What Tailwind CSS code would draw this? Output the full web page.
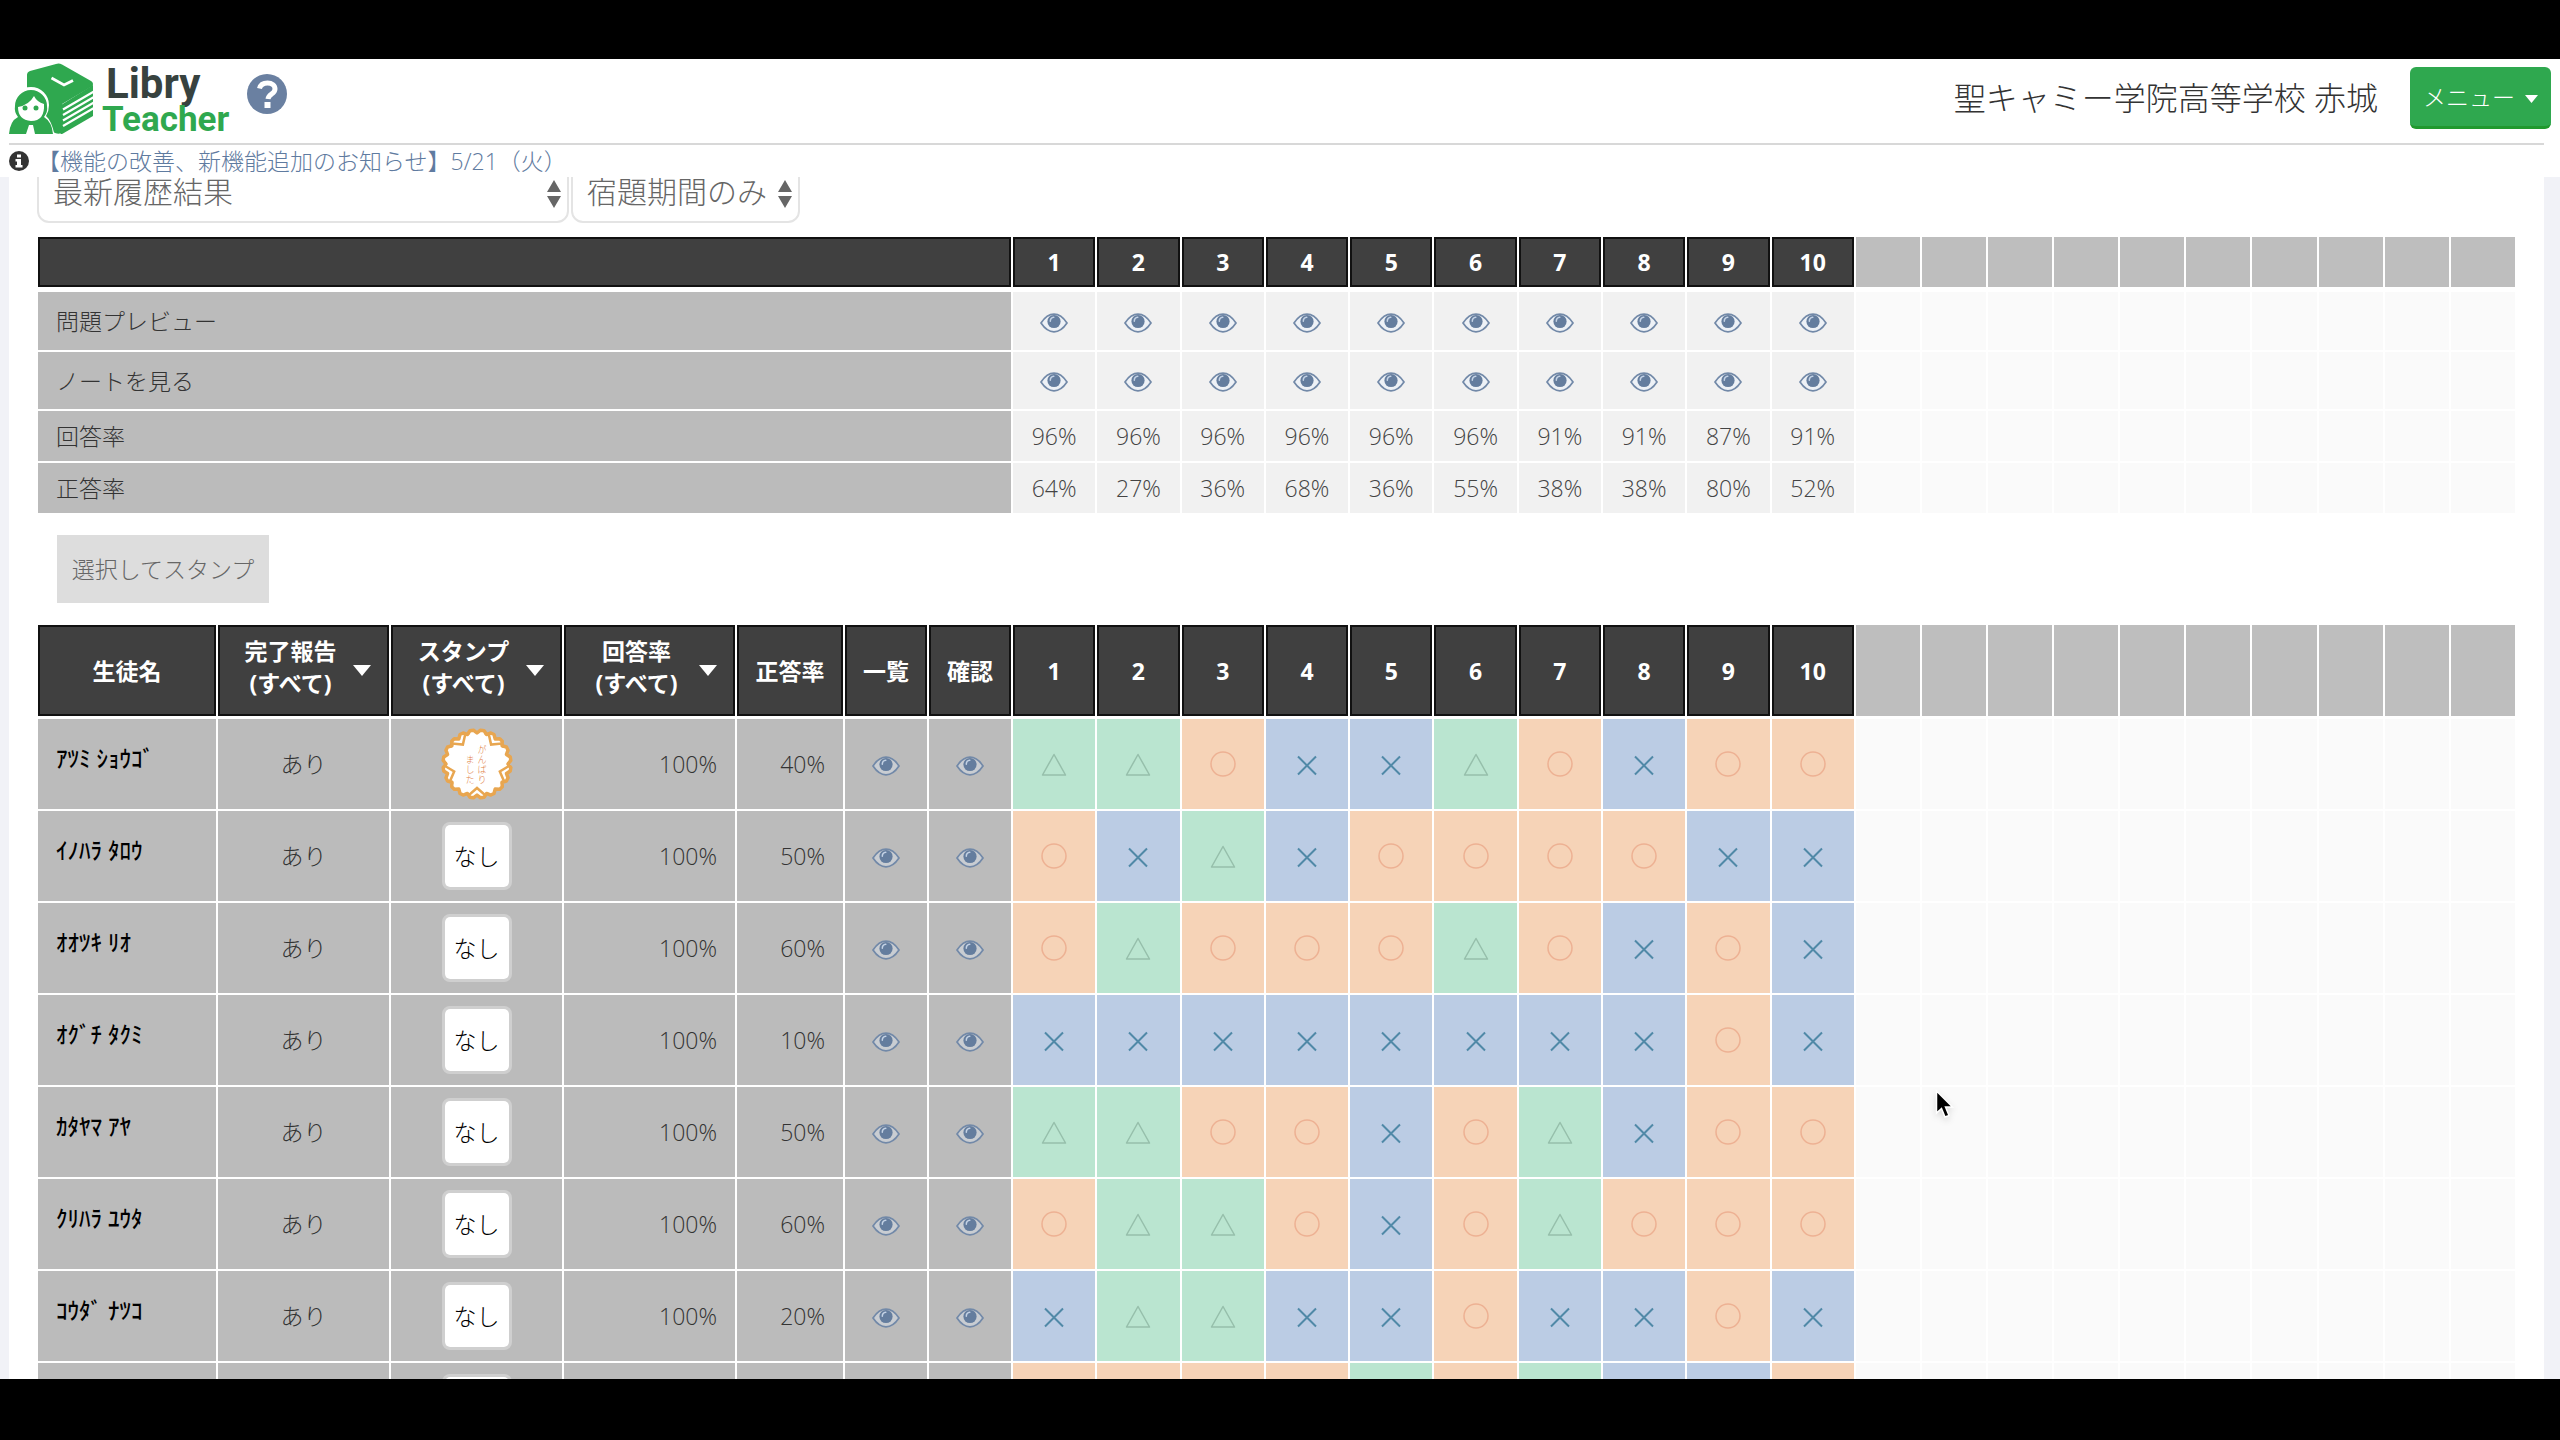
<!DOCTYPE html>
<html lang="ja">
<head>
    <meta charset="UTF-8">
    <meta name="viewport" content="width=device-width, initial-scale=1.0">
    <title>Libry Teacher</title>
    <script src="https://cdn.jsdelivr.net/npm/@tailwindcss/browser@4"></script>
</head>
<body class="h-screen flex flex-col bg-black pt-[59px] pb-[61px] overflow-hidden font-['Open_Sans','Noto_Sans_CJK_JP',sans-serif] text-[23px] leading-8 text-[#333]">

<!-- Shared icons -->
<svg class="hidden">
    <symbol id="eye" viewBox="0 0 28 20">
        <path d="M1 10C5 4 9 1.200 14 1.200S23 4 27 10C23 16 19 18.800 14 18.800S5 16 1 10Z" fill="#e6f1ff" fill-opacity=".35" stroke="#7289a8" stroke-width="1.700"/>
        <circle cx="14" cy="8.500" r="6.600" fill="#647d9e"/>
        <path d="M10.300 8.300C10.300 6 11.600 4.500 13.800 4.300" fill="none" stroke="#c3d2e5" stroke-width="1.500" stroke-linecap="round"/>
    </symbol>
    <symbol id="circle" viewBox="0 -1 28 28">
        <circle cx="14" cy="13" r="12" fill="none" stroke="#edb193" stroke-width="1.500"/>
    </symbol>
    <symbol id="triangle" viewBox="0 -1 28 28">
        <path d="M14 3.500L25.500 24H2.500Z" fill="none" stroke="#96bfab" stroke-width="1.500" stroke-linejoin="round"/>
    </symbol>
    <symbol id="cross" viewBox="0 -1 28 28">
        <path d="M5 5.500L23 23.500M23 5.500L5 23.500" fill="none" stroke="#5089a7" stroke-width="2"/>
    </symbol>
    <symbol id="caret" viewBox="0 0 18 11">
        <path d="M0 0H18L9 11Z" fill="currentColor"/>
    </symbol>
    <symbol id="updown" viewBox="0 0 14 28">
        <path d="M7 0L14 12H0ZM7 28L0 16H14Z" fill="#666"/>
    </symbol>
</svg>

<div class="relative flex-1 min-h-0 overflow-hidden bg-[#f1f2f7]">
    <!-- Header -->
    <header class="relative z-10 bg-white">
        <div class="flex items-start h-[84px] ml-[9px] mr-[9px] pt-1">
            <a href="#" class="flex items-start" aria-label="Libry Teacher">
                <svg class="w-[85px] h-[72px]" viewBox="0 0 85 72">
                    <path d="M18 12Q18 9 21 8L47 1Q50 0 53 1.500L82 18Q85 20 83.500 23L53 41L52 70Q50 71.500 46 70L18 50Z" fill="#2fa84f"/>
                    <path d="M52 42L84 22V53L54 70.500Q51 72 51 69Z" fill="#2fa84f"/>
                    <path d="M54 46.500L85 28.500M54 52L85 34M54 57.500L85 39.500M54 63L85 45" stroke="#fff" stroke-width="2.200" fill="none"/>
                    <path d="M42.500 15L55 22L64 17.500" stroke="#fff" stroke-width="2.800" fill="none"/>
                    <path d="M-2 74Q0 56 8 53Q4 48 4 42A18 18 0 0 1 40 42Q40 48 37 53Q43 58 46 74Z" fill="#fff"/>
                    <path d="M0 71Q1 58 9 54Q5 49 6 43A16 16 0 0 1 38 43Q39 49 35 54Q43 59 44 71H26L24 62H20L17 71Z" fill="#2fa84f"/>
                    <path d="M9 44Q20 42 25 33Q28 39 35 41Q36 58 22 58Q9 57 9 44Z" fill="#fff"/>
                    <circle cx="16" cy="45" r="2.500" fill="#2fa84f"/>
                    <circle cx="27" cy="45" r="2.500" fill="#2fa84f"/>
                </svg>
                <span class="flex flex-col ml-2 font-['Roboto'] font-bold">
                    <span class="ml-1 mt-1 h-[34px] text-[42px] leading-[34px] text-[#37423f]">Libry</span>
                    <span class="h-[36px] text-[35px] leading-[38px] text-[#2fa84f]">Teacher</span>
                </span>
            </a>
            <button class="ml-[18px] mt-[11px]" aria-label="ヘルプ">
                <svg class="size-10" viewBox="0 0 40 40">
                    <circle cx="20" cy="20" r="20" fill="#6a80a1"/>
                    <path d="M12.500 14.500C13.500 10.500 16.500 9 20.500 9C25 9 28 11.300 28 15C28 20 21.500 20 21 25" fill="none" stroke="#fff" stroke-width="5"/>
                    <rect x="17.500" y="28" width="6" height="6" fill="#fff"/>
                </svg>
            </button>
            <p class="ml-auto mr-8 mt-3 text-[32px] leading-[46px] font-light">聖キャミー学院高等学校 赤城</p>
            <button class="flex items-center justify-center gap-2.5 mt-1 w-[141px] h-[62px] rounded-md border-b-3 border-[#20992e] bg-[#2fa84f] text-white font-light">
                メニュー
                <svg class="w-[13px] h-2 mt-1"><use href="#caret"/></svg>
            </button>
        </div>
        <div class="ml-[9px] mr-4 border-t-2 border-[#d8d8d8]"></div>
        <div class="flex items-center gap-2 h-8 ml-[9px]">
            <svg class="size-5" viewBox="0 0 20 20">
                <circle cx="10" cy="10" r="10" fill="#333"/>
                <path d="M8 3.500H12V6.500H8ZM6.500 8H12V14H13.500V16.500H6.500V14H8V10.500H6.500Z" fill="#fff"/>
            </svg>
            <a href="#" class="font-light text-[#5f7ba0]">【機能の改善、新機能追加のお知らせ】5/21（火）</a>
        </div>
    </header>

    <!-- Homework results -->
    <main class="-mt-4 ml-[9px] mr-4 pl-[29px] pr-[27px] bg-white">
        <div class="flex gap-0.5 -ml-px mb-[14px]">
            <label class="relative w-[532px]">
                <select aria-label="結果の種類" class="appearance-none w-full h-[62px] px-3.5 rounded-xl border-2 border-[#e4e4e4] bg-white text-[30px] font-light text-[#666]">
                    <option>最新履歴結果</option>
                </select>
                <svg class="absolute right-2 top-[19px] w-3.5 h-7"><use href="#updown"/></svg>
            </label>
            <label class="relative w-[229px]">
                <select aria-label="期間" class="appearance-none w-full h-[62px] px-3.5 rounded-xl border-2 border-[#e4e4e4] bg-white text-[30px] font-light text-[#666]">
                    <option>宿題期間のみ</option>
                </select>
                <svg class="absolute right-2 top-[19px] w-3.5 h-7"><use href="#updown"/></svg>
            </label>
        </div>

        <!-- Totals per question -->
        <table class="w-full table-fixed border-separate border-spacing-0">
            <thead id="totalsHead"></thead>
            <tbody id="totalsBody"></tbody>
        </table>

        <button class="block mt-5 mb-[22px] ml-[19px] w-[212px] h-[68px] bg-[#ddd] font-light text-[#666]">選択してスタンプ</button>

        <!-- Students -->
        <table class="w-full table-fixed border-separate border-spacing-0">
            <thead id="studentsHead"></thead>
            <tbody id="studentsBody"></tbody>
        </table>
    </main>

    <!-- Mouse pointer -->
    <svg class="absolute left-[1935px] top-[1030px] w-[20px] h-[32px] drop-shadow-md" viewBox="0 0 20 32">
        <path d="M1.500 2V24L6.500 19.500L10 28L14 26.500L10.500 18H17.500Z" fill="#000" stroke="#fff" stroke-width="1.500"/>
    </svg>
</div>

<script>
    const answerRates = ['96%', '96%', '96%', '96%', '96%', '96%', '91%', '91%', '87%', '91%'];
    const correctRates = ['64%', '27%', '36%', '68%', '36%', '55%', '38%', '38%', '80%', '52%'];

    // o = correct, t = partly correct, x = wrong
    const students = [
        {name: 'ｱﾂﾐ ｼｮｳｺﾞ', report: 'あり', stamp: 'がんばりました', answered: '100%', correct: '40%', marks: 'ttoxxtoxoo'},
        {name: 'ｲﾉﾊﾗ ﾀﾛｳ', report: 'あり', stamp: 'なし', answered: '100%', correct: '50%', marks: 'oxtxooooxx'},
        {name: 'ｵｵﾂｷ ﾘｵ', report: 'あり', stamp: 'なし', answered: '100%', correct: '60%', marks: 'otoootoxox'},
        {name: 'ｵｸﾞﾁ ﾀｸﾐ', report: 'あり', stamp: 'なし', answered: '100%', correct: '10%', marks: 'xxxxxxxxox'},
        {name: 'ｶﾀﾔﾏ ｱﾔ', report: 'あり', stamp: 'なし', answered: '100%', correct: '50%', marks: 'ttooxotxoo'},
        {name: 'ｸﾘﾊﾗ ﾕｳﾀ', report: 'あり', stamp: 'なし', answered: '100%', correct: '60%', marks: 'ottoxotooo'},
        {name: 'ｺｳﾀﾞ ﾅﾂｺ', report: 'あり', stamp: 'なし', answered: '100%', correct: '20%', marks: 'xttxxoxxox'},
        {name: '', report: '', stamp: '', answered: '', correct: '', marks: 'oooototxxo'},
    ];

    const markCells = {
        o: '<td class="border-r-2 border-b-2 border-white bg-[#f6d3b7]"><svg class="size-7 mx-auto" role="img" aria-label="正解"><use href="#circle"/></svg></td>',
        t: '<td class="border-r-2 border-b-2 border-white bg-[#bae5d0]"><svg class="size-7 mx-auto" role="img" aria-label="部分正解"><use href="#triangle"/></svg></td>',
        x: '<td class="border-r-2 border-b-2 border-white bg-[#bbcce4]"><svg class="size-7 mx-auto" role="img" aria-label="不正解"><use href="#cross"/></svg></td>',
    };

    const eyeButton = '<button class="block mx-auto pt-[3px]" aria-label="表示"><svg class="w-7 h-5"><use href="#eye"/></svg></button>';
    const emptyCells = '<td class="border-r-2 border-b-2 border-white bg-[#fafafa]"></td>'.repeat(10);
    const darkCell = 'border-r-2 border-white bg-[#404040] bg-clip-padding shadow-[inset_0_0_0_2px_#111] text-white font-bold';

    // Question number headers, then ten unused columns
    const questionHeads = border => {
        let html = '';
        for (let i = 1; i <= 10; i++) {
            html += `<th class="w-[3.4%] ${border} ${darkCell}">${i}</th>`;
        }
        return html + `<th class="${border} border-r-2 border-white bg-[#bebebe]"></th>`.repeat(10);
    };

    const totalsRow = (label, height, cells) => `
        <tr class="${height}">
            <th class="pl-[18px] border-r-2 border-b-2 border-white bg-[#bbb] text-left font-light">${label}</th>
            ${cells.map(c => `<td class="border-r-2 border-b-2 border-white bg-[#f1f1f1] text-center font-light text-[#444]">${c}</td>`).join('')}
            ${emptyCells}
        </tr>`;

    document.getElementById('totalsHead').innerHTML = `
        <tr class="h-[55px]"><th class="w-[975px] border-b-5 ${darkCell}"></th>${questionHeads('border-b-5')}</tr>`;
    document.getElementById('totalsBody').innerHTML =
        totalsRow('問題プレビュー', 'h-[60px]', Array(10).fill(eyeButton)) +
        totalsRow('ノートを見る', 'h-[59px]', Array(10).fill(eyeButton)) +
        totalsRow('回答率', 'h-[52px]', answerRates) +
        totalsRow('正答率', 'h-[52px]', correctRates);

    const filterHead = title => `
        <th class="w-[173px] border-b-3 ${darkCell}">
            <button class="flex items-center justify-center gap-4 w-full pb-2 pl-2">
                <span class="w-[92px]">${title}<br>(すべて)</span>
                <svg class="w-[18px] h-[11px] mt-2"><use href="#caret"/></svg>
            </button>
        </th>`;

    document.getElementById('studentsHead').innerHTML = `
        <tr class="h-[94px]">
            <th class="w-[180px] border-b-3 ${darkCell}">生徒名</th>
            ${filterHead('完了報告')}${filterHead('スタンプ')}${filterHead('回答率')}
            <th class="w-[108px] border-b-3 ${darkCell}">正答率</th>
            <th class="w-[84px] border-b-3 ${darkCell}">一覧</th>
            <th class="w-[84px] border-b-3 ${darkCell}">確認</th>
            ${questionHeads('border-b-3')}
        </tr>`;

    // Scalloped flower stamp
    const petals = [0, 72, 144, 216, 288];
    const rim = Array.from({length: 60}, (_, i) => {
        const r = i % 3 === 0 ? 31 : 34;
        const a = i * Math.PI / 30;
        return `${36 + r * Math.sin(a)},${36 - r * Math.cos(a)}`;
    }).join(' ');
    const flowerStamp = `
        <svg class="size-[72px] mx-auto" viewBox="0 0 72 72">
            <polygon points="${rim}" fill="#fff" stroke="#e8a650" stroke-width="3.500" stroke-linejoin="round"/>
            ${petals.map(d => `
                <g transform="rotate(${d} 36 36)" fill="none" stroke="#e8a650">
                    <path d="M24.500 65L28 67L36 60L44 67L47.500 65" stroke-width="2.500"/>
                </g>`).join('')}
            <g fill="#e07b3c" font-size="9" text-anchor="middle">
                ${[...'がんばり'].map((c, i) => `<text x="41" y="${25 + i * 10}">${c}</text>`).join('')}
                ${[...'ました'].map((c, i) => `<text x="29" y="${35 + i * 10}">${c}</text>`).join('')}
            </g>
        </svg>`;
    const stampButton = label => `<button class="block mx-auto w-[70px] h-[68px] rounded-lg border-3 border-white/30 bg-white bg-clip-padding font-light text-black">${label}</button>`;

    const grayCell = 'border-r-2 border-b-2 border-white bg-[#bbb] font-light';
    document.getElementById('studentsBody').innerHTML = students.map(s => `
        <tr class="h-[92px]">
            <th class="pl-[18px] pb-3 text-left text-black border-r-2 border-b-2 border-white bg-[#bbb] font-medium">${s.name}</th>
            <td class="text-center ${grayCell}">${s.report}</td>
            <td class="${grayCell}">${s.stamp === 'がんばりました' ? flowerStamp : stampButton(s.stamp)}</td>
            <td class="pr-[18px] text-right ${grayCell}">${s.answered}</td>
            <td class="pr-[18px] text-right ${grayCell}">${s.correct}</td>
            <td class="${grayCell}">${eyeButton}</td>
            <td class="${grayCell}">${eyeButton}</td>
            ${[...s.marks].map(m => markCells[m]).join('')}
            ${emptyCells}
        </tr>`).join('');
</script>
</body>
</html>
